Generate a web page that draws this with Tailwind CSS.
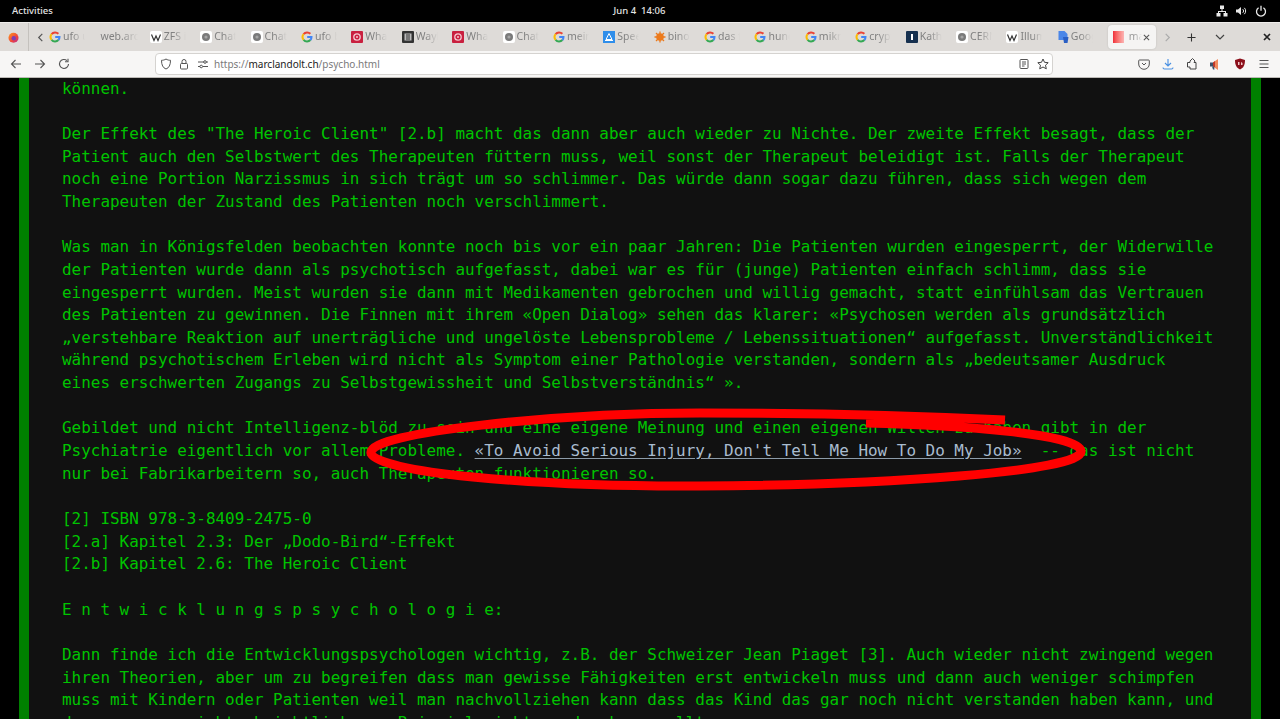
<!DOCTYPE html>
<html lang="de">
<head>
<meta charset="utf-8">
<title>psycho</title>
<script src="https://cdn.jsdelivr.net/npm/@tailwindcss/browser@4"></script>
</head>
<body class="bg-black">
<svg class="hidden" xmlns="http://www.w3.org/2000/svg">
  <symbol id="g" viewBox="0 0 12 12"><g fill="none" stroke-width="2"><path d="M9.4 2.8A4.5 4.5 0 0 0 2.6 3.2" stroke="#ea4335"/><path d="M2.6 3.2A4.5 4.5 0 0 0 2.6 8.8" stroke="#fbbc05"/><path d="M2.6 8.8A4.5 4.5 0 0 0 9.4 9" stroke="#34a853"/><path d="M9.4 9A4.5 4.5 0 0 0 10.5 6H6.2" stroke="#4285f4"/></g></symbol>
  <symbol id="chat" viewBox="0 0 12 12"><rect width="12" height="12" rx="2" fill="#fff"/><circle cx="6" cy="6" r="4" fill="#7a7a7a"/><circle cx="6" cy="6" r="1.6" fill="#a5a5a5"/></symbol>
  <symbol id="wiki" viewBox="0 0 12 12"><rect width="12" height="12" rx="2" fill="#fff"/><path d="M1.5 3.5 4 9.5 6 5l2 4.500 2.500-6" fill="none" stroke="#333" stroke-width="1.200"/></symbol>
  <symbol id="what" viewBox="0 0 12 12"><rect width="12" height="12" rx="1" fill="#c9203f"/><circle cx="6" cy="6" r="3.200" fill="none" stroke="#f5c6cf" stroke-width="1.300"/><circle cx="6" cy="6" r="1" fill="#f5c6cf"/></symbol>
</svg>

<div class="relative w-[1280px] h-[719px] overflow-hidden flex flex-col font-['Noto_Sans',sans-serif]">

  <!-- GNOME top bar -->
  <header class="h-[22px] shrink-0 bg-black text-[#e4e4e4] flex items-center justify-between pl-3 pr-[13px] text-[9.500px] font-medium">
    <div class="w-[200px]">Activities</div>
    <div class="whitespace-pre">Jun 4  14:06</div>
    <div class="w-[200px] flex justify-end items-center gap-[7px]">
      <svg class="w-3 h-3" viewBox="0 0 12 12" fill="#e8e8e8"><rect x="4" y="0.500" width="4" height="3.500"/><rect x="0.500" y="8" width="4" height="3.500"/><rect x="7.500" y="8" width="4" height="3.500"/><path d="M5.500 4h1v2h3.500v2h-1V7H3v1H2V6h3.500z"/></svg>
      <svg class="w-3 h-3" viewBox="0 0 12 12" fill="none" stroke="#e8e8e8"><path d="M1 4.500h2L6 2v8L3 7.500H1z" fill="#e8e8e8" stroke="none"/><path d="M7.800 4.200a2.500 2.500 0 0 1 0 3.600M9.300 2.800a4.500 4.500 0 0 1 0 6.400" stroke-width="1"/></svg>
      <svg class="w-3 h-3 ml-[1px]" viewBox="0 0 12 12" fill="none" stroke="#e8e8e8" stroke-width="1.300"><path d="M3.600 2.800a4.500 4.500 0 1 0 4.800 0M6 .8v5"/></svg>
    </div>
  </header>

  <!-- Tab strip -->
  <nav class="h-[29px] shrink-0 bg-[#dedbd8] border-t border-[#efedeb] border-b-[#c9c6c2] flex items-center text-[10.500px] text-[#808080]">
    <div class="w-[29px] h-full shrink-0 flex items-center border-r border-[#c4c1bd] pl-[8px]">
      <svg class="w-[11px] h-[11px]" viewBox="0 0 12 12"><defs><linearGradient id="ff" x1="0" y1="0" x2="1" y2="1"><stop offset="0" stop-color="#ff9a1f"/><stop offset=".6" stop-color="#f0433c"/><stop offset="1" stop-color="#b52a9a"/></linearGradient></defs><circle cx="6" cy="6.300" r="5.500" fill="url(#ff)"/><circle cx="6.300" cy="6.800" r="2.400" fill="#7c3fb5"/></svg>
    </div>
    <div class="w-[17px] shrink-0 flex justify-center pl-[6px]">
      <svg class="w-[9px] h-[9px]" viewBox="0 0 10 10" fill="none" stroke="#555" stroke-width="1.300"><path d="M7 1 3 5l4 4"/></svg>
    </div>

    <div class="w-[50.400px] shrink-0 flex items-center pl-[3px] gap-[2px]"><svg class="w-3 h-3 shrink-0"><use href="#g"/></svg><span class="w-[22px] overflow-hidden whitespace-nowrap [mask-image:linear-gradient(90deg,#000_40%,transparent)]">ufo unter</span></div>
    <div class="w-[50.400px] shrink-0 flex items-center pl-[4px]"><span class="w-[38px] overflow-hidden whitespace-nowrap [mask-image:linear-gradient(90deg,#000_55%,transparent)]">web.archive</span></div>
    <div class="w-[50.400px] shrink-0 flex items-center pl-[3px] gap-[2px]"><svg class="w-3 h-3 shrink-0"><use href="#wiki"/></svg><span class="w-[22px] overflow-hidden whitespace-nowrap [mask-image:linear-gradient(90deg,#000_40%,transparent)]">ZFS is</span></div>
    <div class="w-[50.400px] shrink-0 flex items-center pl-[3px] gap-[2px]"><svg class="w-3 h-3 shrink-0"><use href="#chat"/></svg><span class="w-[22px] overflow-hidden whitespace-nowrap [mask-image:linear-gradient(90deg,#000_40%,transparent)]">ChatGPT</span></div>
    <div class="w-[50.400px] shrink-0 flex items-center pl-[3px] gap-[2px]"><svg class="w-3 h-3 shrink-0"><use href="#chat"/></svg><span class="w-[22px] overflow-hidden whitespace-nowrap [mask-image:linear-gradient(90deg,#000_40%,transparent)]">ChatGPT</span></div>
    <div class="w-[50.400px] shrink-0 flex items-center pl-[3px] gap-[2px]"><svg class="w-3 h-3 shrink-0"><use href="#g"/></svg><span class="w-[22px] overflow-hidden whitespace-nowrap [mask-image:linear-gradient(90deg,#000_40%,transparent)]">ufo b</span></div>
    <div class="w-[50.400px] shrink-0 flex items-center pl-[3px] gap-[2px]"><svg class="w-3 h-3 shrink-0"><use href="#what"/></svg><span class="w-[22px] overflow-hidden whitespace-nowrap [mask-image:linear-gradient(90deg,#000_40%,transparent)]">What is</span></div>
    <div class="w-[50.400px] shrink-0 flex items-center pl-[3px] gap-[2px]"><svg class="w-3 h-3 shrink-0" viewBox="0 0 12 12"><rect width="12" height="12" rx="1" fill="#333"/><rect x="2.500" y="2.500" width="7" height="7" fill="#bbb"/><path d="M4 4h4M4 6h4M4 8h4" stroke="#333"/></svg><span class="w-[22px] overflow-hidden whitespace-nowrap [mask-image:linear-gradient(90deg,#000_40%,transparent)]">Wayback</span></div>
    <div class="w-[50.400px] shrink-0 flex items-center pl-[3px] gap-[2px]"><svg class="w-3 h-3 shrink-0"><use href="#what"/></svg><span class="w-[22px] overflow-hidden whitespace-nowrap [mask-image:linear-gradient(90deg,#000_40%,transparent)]">What is</span></div>
    <div class="w-[50.400px] shrink-0 flex items-center pl-[3px] gap-[2px]"><svg class="w-3 h-3 shrink-0"><use href="#chat"/></svg><span class="w-[22px] overflow-hidden whitespace-nowrap [mask-image:linear-gradient(90deg,#000_40%,transparent)]">ChatGPT</span></div>
    <div class="w-[50.400px] shrink-0 flex items-center pl-[3px] gap-[2px]"><svg class="w-3 h-3 shrink-0"><use href="#g"/></svg><span class="w-[22px] overflow-hidden whitespace-nowrap [mask-image:linear-gradient(90deg,#000_40%,transparent)]">mein</span></div>
    <div class="w-[50.400px] shrink-0 flex items-center pl-[3px] gap-[2px]"><svg class="w-3 h-3 shrink-0" viewBox="0 0 12 12"><rect width="12" height="12" fill="#2f8eea"/><path d="M6 2.500 3 8.500h6zM2 9.500h8" fill="none" stroke="#fff"/></svg><span class="w-[22px] overflow-hidden whitespace-nowrap [mask-image:linear-gradient(90deg,#000_40%,transparent)]">Speedtest</span></div>
    <div class="w-[50.400px] shrink-0 flex items-center pl-[3px] gap-[2px]"><svg class="w-3 h-3 shrink-0" viewBox="0 0 12 12"><circle cx="6" cy="6" r="3.800" fill="#ec7a1c"/><path d="M6 .5v11M.5 6h11M2 2l8 8M10 2l-8 8" stroke="#ec7a1c" stroke-width="1.300"/></svg><span class="w-[22px] overflow-hidden whitespace-nowrap [mask-image:linear-gradient(90deg,#000_40%,transparent)]">binomial</span></div>
    <div class="w-[50.400px] shrink-0 flex items-center pl-[3px] gap-[2px]"><svg class="w-3 h-3 shrink-0"><use href="#g"/></svg><span class="w-[22px] overflow-hidden whitespace-nowrap [mask-image:linear-gradient(90deg,#000_40%,transparent)]">das f</span></div>
    <div class="w-[50.400px] shrink-0 flex items-center pl-[3px] gap-[2px]"><svg class="w-3 h-3 shrink-0"><use href="#g"/></svg><span class="w-[22px] overflow-hidden whitespace-nowrap [mask-image:linear-gradient(90deg,#000_40%,transparent)]">hund</span></div>
    <div class="w-[50.400px] shrink-0 flex items-center pl-[3px] gap-[2px]"><svg class="w-3 h-3 shrink-0"><use href="#g"/></svg><span class="w-[22px] overflow-hidden whitespace-nowrap [mask-image:linear-gradient(90deg,#000_40%,transparent)]">mikro</span></div>
    <div class="w-[50.400px] shrink-0 flex items-center pl-[3px] gap-[2px]"><svg class="w-3 h-3 shrink-0"><use href="#g"/></svg><span class="w-[22px] overflow-hidden whitespace-nowrap [mask-image:linear-gradient(90deg,#000_40%,transparent)]">crypto</span></div>
    <div class="w-[50.400px] shrink-0 flex items-center pl-[3px] gap-[2px]"><svg class="w-3 h-3 shrink-0" viewBox="0 0 12 12"><rect width="12" height="12" rx="1" fill="#16304f"/><rect x="5" y="3" width="2" height="6" fill="#fff"/></svg><span class="w-[22px] overflow-hidden whitespace-nowrap [mask-image:linear-gradient(90deg,#000_40%,transparent)]">Kathy</span></div>
    <div class="w-[50.400px] shrink-0 flex items-center pl-[3px] gap-[2px]"><svg class="w-3 h-3 shrink-0"><use href="#chat"/></svg><span class="w-[22px] overflow-hidden whitespace-nowrap [mask-image:linear-gradient(90deg,#000_40%,transparent)]">CERN</span></div>
    <div class="w-[50.400px] shrink-0 flex items-center pl-[3px] gap-[2px]"><svg class="w-3 h-3 shrink-0"><use href="#wiki"/></svg><span class="w-[22px] overflow-hidden whitespace-nowrap [mask-image:linear-gradient(90deg,#000_55%,transparent)]">Illumin</span></div>
    <div class="w-[50.400px] shrink-0 flex items-center pl-[3px] gap-[2px]"><svg class="w-3 h-3 shrink-0" viewBox="0 0 12 12"><path d="M1.500 0h6l3 3v6h-9z" fill="#4a86e8"/><path d="M6 6h5.500l-1 6H7z" fill="#2a5fc4"/></svg><span class="w-[22px] overflow-hidden whitespace-nowrap [mask-image:linear-gradient(90deg,#000_40%,transparent)]">Google</span></div>

    <div class="ml-[3.600px] w-12 h-[24px] shrink-0 rounded-[4px] bg-[#f5f4f3] shadow-[0_0_2px_rgba(0,0,0,0.15)] flex items-center pl-[5px]">
      <div class="w-[11px] h-3 shrink-0 bg-gradient-to-r from-[#ef2b3a] to-[#fbb4b4]"></div>
      <span class="ml-[5px] w-[13px] overflow-hidden whitespace-nowrap text-[#999] [mask-image:linear-gradient(90deg,#000_40%,transparent)]">marc</span>
      <svg class="w-[7px] h-[7px] ml-[1px]" viewBox="0 0 8 8" stroke="#555" stroke-width="1.200"><path d="M1 1l6 6M7 1 1 7"/></svg>
    </div>
    <div class="w-6 shrink-0 flex justify-center">
      <svg class="w-[9px] h-[9px]" viewBox="0 0 10 10" fill="none" stroke="#aaa" stroke-width="1.300"><path d="M3 1l4 4-4 4"/></svg>
    </div>
    <div class="w-6 shrink-0 flex justify-center">
      <svg class="w-[9px] h-[9px]" viewBox="0 0 10 10" stroke="#333" stroke-width="1.200"><path d="M5 .5v9M.5 5h9"/></svg>
    </div>
    <div class="w-8 shrink-0 flex justify-center">
      <svg class="w-[10px] h-[10px]" viewBox="0 0 10 10" fill="none" stroke="#444" stroke-width="1.200"><path d="M1 3l4 4 4-4"/></svg>
    </div>
    <div class="ml-[19px] w-6 shrink-0 flex justify-center">
      <svg class="w-2 h-2" viewBox="0 0 8 8" stroke="#222" stroke-width="1.700"><path d="M1 1l6 6M7 1 1 7"/></svg>
    </div>
  </nav>

  <!-- Toolbar -->
  <div class="h-[27px] shrink-0 bg-[#f7f6f5] border-b border-[#bdbab6] flex items-center pl-1">
    <div class="w-6 shrink-0 flex justify-center"><svg class="w-3 h-3" viewBox="0 0 12 12" fill="none" stroke="#555" stroke-width="1.100"><path d="M11 6H1.500M5.500 2 1.500 6l4 4"/></svg></div>
    <div class="w-6 shrink-0 flex justify-center"><svg class="w-3 h-3" viewBox="0 0 12 12" fill="none" stroke="#555" stroke-width="1.100"><path d="M1 6h9.500M6.500 2l4 4-4 4"/></svg></div>
    <div class="w-6 shrink-0 flex justify-center"><svg class="w-3 h-3" viewBox="0 0 12 12" fill="none" stroke="#555" stroke-width="1.100"><path d="M10.500 6A4.500 4.500 0 1 1 9 2.600"/><path d="M10 .8v3H7" /></svg></div>

    <div class="ml-[79px] w-[898px] h-[22px] shrink-0 bg-white rounded-[4px] border border-[#d5d3d0] flex items-center text-[10px] text-[#7a7a7a]">
      <svg class="ml-[4px] w-3 h-3 shrink-0" viewBox="0 0 12 12" fill="none" stroke="#555"><path d="M6 1c1.500 1 3 1.300 4.500 1.300C10.500 7 9 10 6 11 3 10 1.500 7 1.500 2.300 3 2.300 4.500 2 6 1z"/></svg>
      <svg class="ml-[6px] w-3 h-3 shrink-0" viewBox="0 0 12 12" fill="none" stroke="#555"><rect x="2.500" y="5.500" width="7" height="5.500" rx="1"/><path d="M4 5.500V3.500a2 2 0 0 1 4 0v2"/></svg>
      <svg class="ml-[7px] w-3 h-3 shrink-0" viewBox="0 0 12 12" fill="none" stroke="#555"><path d="M1 4h6M9 4h2M1 8.500h2M6 8.500h5"/><circle cx="8" cy="4" r="1.300"/><circle cx="4.200" cy="8.500" r="1.300"/></svg>
      <span class="ml-[5px]">https://<span class="text-[#222]">marclandolt.ch</span>/psycho.html</span>
      <svg class="ml-auto w-3 h-3 shrink-0" viewBox="0 0 12 12" fill="none" stroke="#555"><rect x="2" y="1.500" width="8" height="9" rx="1"/><path d="M4 4h4M4 6h4M4 8h2.500"/></svg>
      <svg class="ml-[7px] mr-[3px] w-3 h-3 shrink-0" viewBox="0 0 12 12" fill="none" stroke="#444"><path d="M6 1l1.500 3.300 3.700.4-2.700 2.500.8 3.600L6 9 2.700 10.800l.8-3.600L.8 4.700l3.700-.4z"/></svg>
    </div>

    <div class="ml-[79px] w-6 shrink-0 flex justify-center"><svg class="w-3 h-3" viewBox="0 0 12 12" fill="none" stroke="#555"><path d="M1.500 2h9a.8.8 0 0 1 .8.8V6a5.300 5.300 0 0 1-10.600 0V2.800a.8.8 0 0 1 .8-.8z"/><path d="M4 5l2 2 2-2"/></svg></div>
    <div class="w-6 shrink-0 flex justify-center"><svg class="w-3 h-3" viewBox="0 0 12 12" fill="none" stroke="#4a90e2" stroke-width="1.100"><path d="M6 1v6.500M3 5l3 3 3-3M1 9.500c0 1 .5 1.500 1.500 1.500h7c1 0 1.500-.5 1.500-1.500"/></svg></div>
    <div class="w-6 shrink-0 flex justify-center"><svg class="w-3 h-3" viewBox="0 0 12 12" fill="none" stroke="#444"><path d="M1.500 4.500h2.500V3l2.500-2.500L9 3l-1 1.500h2V11H4V9H1.500z"/></svg></div>
    <div class="w-6 shrink-0 flex justify-center"><svg class="w-3 h-3" viewBox="0 0 12 12"><path d="M0 4.500h3v4H0z" fill="#3b5168"/><path d="M3 4.500 8 1v11L3 8.500z" fill="#f08a5d"/><path d="M3 4.500 5 3v6.500L3 8.500z" fill="#c0392b"/><path d="M2 8.500h2l.5 3H3z" fill="#3b5168"/></svg></div>
    <div class="w-6 shrink-0 flex justify-center"><svg class="w-3 h-3" viewBox="0 0 12 12"><path d="M6 .5 11 2c0 5-1.500 8-5 9.500C2.500 10 1 7 1 2z" fill="#8b0f1a"/><path d="M4 4v3h1.500V4M7 4v3h1.500V5z" fill="#f0c8c8"/></svg></div>
    <div class="w-6 shrink-0 flex justify-center"><svg class="w-3 h-3" viewBox="0 0 12 12" stroke="#555" stroke-width="1.100"><path d="M1.500 2.500h9M1.500 6h9M1.500 9.500h9"/></svg></div>
  </div>

  <!-- Page -->
  <main class="flex-1 min-h-0 bg-black px-[19px] overflow-hidden">
    <div class="h-full bg-[#111111] border-x-[10px] border-[#008000] pl-[33px] overflow-hidden">
<pre class="-mt-[0.4px] font-['DejaVu_Sans_Mono',monospace] text-[15.950px] leading-[22.650px] text-[#00c400] whitespace-pre">können.

Der Effekt des "The Heroic Client" [2.b] macht das dann aber auch wieder zu Nichte. Der zweite Effekt besagt, dass der
Patient auch den Selbstwert des Therapeuten füttern muss, weil sonst der Therapeut beleidigt ist. Falls der Therapeut
noch eine Portion Narzissmus in sich trägt um so schlimmer. Das würde dann sogar dazu führen, dass sich wegen dem
Therapeuten der Zustand des Patienten noch verschlimmert.

Was man in Königsfelden beobachten konnte noch bis vor ein paar Jahren: Die Patienten wurden eingesperrt, der Widerwille
der Patienten wurde dann als psychotisch aufgefasst, dabei war es für (junge) Patienten einfach schlimm, dass sie
eingesperrt wurden. Meist wurden sie dann mit Medikamenten gebrochen und willig gemacht, statt einfühlsam das Vertrauen
des Patienten zu gewinnen. Die Finnen mit ihrem «Open Dialog» sehen das klarer: «Psychosen werden als grundsätzlich
„verstehbare Reaktion auf unerträgliche und ungelöste Lebensprobleme / Lebenssituationen“ aufgefasst. Unverständlichkeit
während psychotischem Erleben wird nicht als Symptom einer Pathologie verstanden, sondern als „bedeutsamer Ausdruck
eines erschwerten Zugangs zu Selbstgewissheit und Selbstverständnis“ ».

Gebildet und nicht Intelligenz-blöd zu sein und eine eigene Meinung und einen eigenen Willen zu haben gibt in der
Psychiatrie eigentlich vor allem Probleme. <a class="text-[#a9bccf] underline decoration-[#8c9ba8] underline-offset-2">«To Avoid Serious Injury, Don't Tell Me How To Do My Job»</a>  -- das ist nicht
nur bei Fabrikarbeitern so, auch Therapeuten funktionieren so.

[2] ISBN 978-3-8409-2475-0
[2.a] Kapitel 2.3: Der „Dodo-Bird“-Effekt
[2.b] Kapitel 2.6: The Heroic Client

E n t w i c k l u n g s p s y c h o l o g i e:

Dann finde ich die Entwicklungspsychologen wichtig, z.B. der Schweizer Jean Piaget [3]. Auch wieder nicht zwingend wegen
ihren Theorien, aber um zu begreifen dass man gewisse Fähigkeiten erst entwickeln muss und dann auch weniger schimpfen
muss mit Kindern oder Patienten weil man nachvollziehen kann dass das Kind das gar noch nicht verstanden haben kann, und
deswegen man nicht absichtlich zum Beispiel nicht werden kann sollte.</pre>
    </div>
  </main>

  <!-- Red hand-drawn ellipse annotation over the page -->
  <svg class="absolute inset-0 w-[1280px] h-[719px] pointer-events-none" viewBox="0 0 1280 719" fill="none">
    <path d="M1005 420C900 415 800 413 700 413C560 413 367 432 371 453C374 472 530 487 700 486C880 485 1084 472 1081 451C1079 434 960 425 866 423" stroke="#ff0000" stroke-width="9"/>
  </svg>
</div>
</body>
</html>
